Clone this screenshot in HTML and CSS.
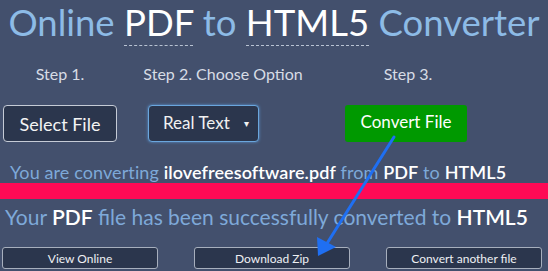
FILE: index.html
```html
<!DOCTYPE html>
<html lang="en">
<head>
  <meta charset="UTF-8" />
  <meta name="viewport" content="width=device-width, initial-scale=1.0"/>
  <title>Online PDF to HTML5 Converter</title>
  <link rel="stylesheet" href="styles.css">
</head>
<body>
  <h1 class="title">Online <span class="pick">PDF</span> to <span class="pick">HTML5</span> Converter</h1>

  <div class="steps">
    <div class="step-label">Step 1.</div>
    <div class="step-label">Step 2. Choose Option</div>
    <div class="step-label">Step 3.</div>

    <div class="cell cell-1"><button class="select-file">Select File</button></div>
    <div class="cell cell-2">
      <div class="select-box">Real Text <span class="caret">&#9662;</span></div>
    </div>
    <div class="cell cell-3"><button class="convert">Convert File</button></div>
  </div>

  <p class="status">You are converting <b>ilovefreesoftware.pdf</b> from <b>PDF</b> to <b>HTML5</b></p>

  <div class="progress"></div>

  <p class="done">Your <b>PDF</b> file has been successfully converted to <b>HTML5</b></p>

  <div class="actions">
    <button class="action">View Online</button>
    <button class="action">Download Zip</button>
    <button class="action">Convert another file</button>
  </div>

  <!-- annotation arrow drawn over the page -->
  <svg class="arrow" width="548" height="271" viewBox="0 0 548 271">
    <line x1="394" y1="137" x2="326" y2="245" stroke="#1f6ff2" stroke-width="3" stroke-linecap="round"/>
    <polygon points="318,256 317,237 336,247" fill="#1f6ff2"/>
  </svg>
</body>
</html>
```

FILE: styles.css
```css
/* === Base === */
* {
  margin: 0;
  padding: 0;
  box-sizing: border-box;
}

body {
  background: #43506d;
  font-family: "Lato", "Open Sans", sans-serif;
  color: #fff;
  width: 548px;
  height: 271px;
  overflow: hidden;
  position: relative;
}

.title {
  font-weight: 400;
  font-size: 36.5px;
  line-height: 44px;
  color: #8dbbe6;
  text-align: center;
  white-space: nowrap;
}

.pick {
  color: #fff;
  border-bottom: 1px dashed #b9c3d3;
  padding-bottom: 1px;
}

/* === Steps === */
.steps {
  display: grid;
  grid-template-columns: 120px 206px 164px;
  margin-top: 21px;
}

.step-label {
  font-size: 16px;
  color: #d7dce5;
  text-align: center;
  line-height: 18px;
}

.cell {
  margin-top: 22px;
}

.cell-2 { padding-left: 28px; }
.cell-3 { padding-left: 19px; }

.select-file {
  margin-left: 3px;
  width: 114px;
  height: 37px;
  background: #2b364d;
  border: 1px solid #c5cbd6;
  border-radius: 4px;
  color: #f4f4f4;
  font-family: inherit;
  font-size: 18px;
}

.select-box {
  width: 111px;
  height: 37px;
  background: #2b364d;
  border: 1px solid #6aa6dd;
  box-shadow: 0 0 3px #5d9ad6;
  border-radius: 4px;
  color: #f1f1f1;
  font-size: 17px;
  line-height: 34px;
  padding-left: 14px;
  position: relative;
}

.caret {
  position: absolute;
  right: 9px;
  top: 0;
  font-size: 10px;
}

.convert {
  width: 122px;
  height: 37px;
  background: #009900;
  border: none;
  border-radius: 3px;
  color: #fff;
  font-family: inherit;
  font-size: 17px;
  padding-bottom: 5px;
}

/* === Status === */
.status {
  margin-top: 20px;
  padding-left: 10px;
  font-size: 18px;
  letter-spacing: 0.1px;
  line-height: 20px;
  color: #7ea9d9;
  white-space: nowrap;
}

.status b,
.done b {
  color: #fff;
  font-weight: 600;
}

.progress {
  height: 16px;
  background: #ff0a55;
  margin-top: 1px;
}

.done {
  margin-top: 5px;
  padding-left: 5px;
  font-size: 21px;
  line-height: 26px;
  color: #7ea9d9;
  white-space: nowrap;
}

/* === Actions === */
.actions {
  display: flex;
  gap: 36px;
  padding-left: 2px;
  margin-top: 17px;
}

.action {
  width: 156px;
  height: 22px;
  background: #2b364d;
  border: 1px solid #a7afbd;
  border-radius: 3px;
  color: #eef0f3;
  font-family: inherit;
  font-size: 12px;
}

.arrow {
  position: absolute;
  left: 0;
  top: 0;
  pointer-events: none;
}
```
